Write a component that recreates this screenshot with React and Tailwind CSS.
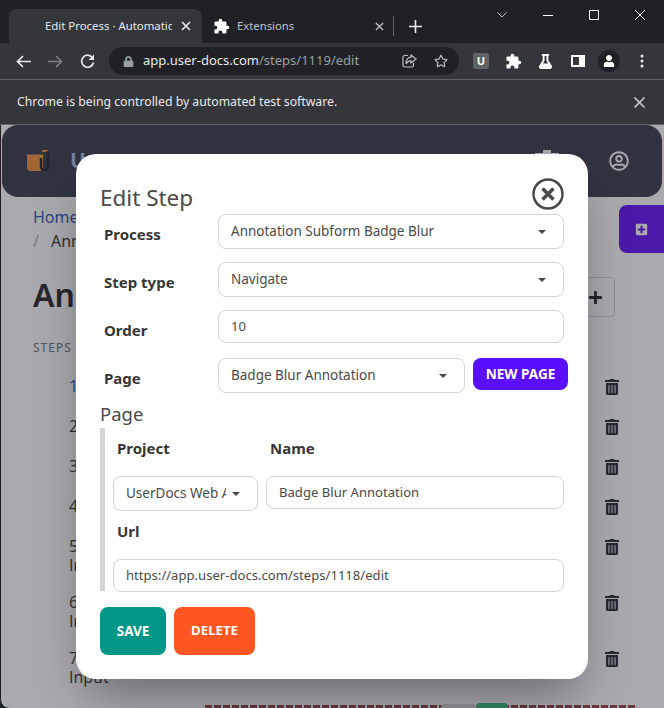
import React from "react";
import { FaTrashAlt, FaPlusSquare, FaRegUserCircle, FaFlask, FaPlus, FaLock, FaRegStar, FaUser } from "react-icons/fa";
import { MdExtension } from "react-icons/md";

const font = { fontFamily: '"Noto Sans", sans-serif' };

function Caret({ className = "" }) {
  return <span className={"ml-auto shrink-0 w-0 h-0 border-x-[4px] border-x-transparent border-t-[4px] border-t-[#4a4a4a] " + className} />;
}

function Select({ value, className = "" }) {
  return (
    <div className={"h-[35px] flex items-center pl-[12px] pr-[17px] border border-[#d4d4d8] rounded-[8px] text-[13.5px] text-[#4a4a4a] bg-white overflow-hidden " + className}>
      <span className="whitespace-nowrap overflow-hidden">{value}</span>
      <Caret />
    </div>
  );
}

function Input({ value, className = "" }) {
  return (
    <div className={"h-[33px] flex items-center pl-[12px] border border-[#d4d4d8] rounded-[8px] text-[13.1px] text-[#4a4a4a] bg-white whitespace-nowrap " + className}>
      {value}
    </div>
  );
}

function Row({ label, children, className = "" }) {
  return (
    <div className={"flex items-start " + className}>
      <label className="w-[118px] shrink-0 pl-[4px] pt-[8px] text-[15px] font-bold text-[#363636] leading-[24px]">{label}</label>
      {children}
    </div>
  );
}

const steps = [
  { n: "1", h: 40 },
  { n: "2", h: 40 },
  { n: "3", h: 40 },
  { n: "4", h: 40 },
  { n: "5", sub: "In", h: 56 },
  { n: "6", sub: "In", h: 56 },
  { n: "7", sub: "Input", h: 56 },
];

function Background() {
  return (
    <div className="h-[583px] bg-white text-[#4a4a4a] overflow-hidden rounded-bl-[8px]">
      <header className="h-[72px] ml-[1px] mr-[2px] rounded-2xl bg-[#484b58] flex items-center pl-[25px] pr-[33px]">
        <svg width="24" height="22" viewBox="0 0 24 22">
          <path d="M0 4.500h16v12.500a4 4 0 0 1-4 4H4a4 4 0 0 1-4-4z" fill="#f59a45" />
          <path d="M15 1h6" stroke="#f59a45" strokeWidth="2" />
          <path d="M14 8v8.500a3.500 3.500 0 0 0 7 0V1" fill="none" stroke="#2e3442" strokeWidth="2.600" />
        </svg>
        <span className="ml-[19px] text-[21px] font-bold text-[#a8c4e0]">U</span>
        <svg className="ml-auto mr-[50px]" width="24" height="22" viewBox="0 0 24 22" fill="#fff"><path d="M0 3h8V0h8v3h8v19H0z" /></svg>
        <FaRegUserCircle className="text-white" size={20} />
      </header>
      <div className="relative pl-[32px] pr-[49px] pt-[8px]">
        <div className="text-[16px] leading-[24px] text-[#485fc7]">Home</div>
        <div className="text-[16px] leading-[24px]"><span className="text-[#b5b5b5] mr-[12px]">/</span>Annotation</div>
        <div className="flex items-center mt-[24px] h-[40px]">
          <h1 className="-mt-[4px] text-[32px] font-semibold text-[#363636]">Annotation</h1>
          <div className="ml-auto w-[40px] h-[40px] border border-[#dbdbdb] rounded-[4px] flex items-center justify-center"><FaPlus size={15} className="text-[#363636]" /></div>
        </div>
        <div className="mt-[22px] h-[18px] text-[12px] leading-[18px] tracking-[1px] text-[#7a7a7a]">STEPS</div>
        <div className="mt-[20px]">
          {steps.map((s) => (
            <div key={s.n} className="flex pl-[36px] text-[16px] leading-[19px] text-[#4a4540]" style={{ height: s.h, fontFamily: '"Open Sans", sans-serif' }}>
              <div>
                <div className={s.n === "1" ? "text-[#485fc7]" : ""}>{s.n}</div>
                {s.sub && <div>{s.sub}</div>}
              </div>
              <FaTrashAlt className="ml-auto mt-[2px] mr-[-5px] text-[#3a3a42]" size={16} />
            </div>
          ))}
        </div>
        <div className="h-[3px] ml-[172px] mr-[-20px] bg-[repeating-linear-gradient(90deg,#9a5050_0_7px,transparent_7px_9px)]" />
        <div className="absolute right-0 top-[8px] w-[45px] h-[48px] rounded-l-[8px] bg-[#6d23f6] flex items-center justify-center">
          <FaPlusSquare size={13} className="text-white" />
        </div>
        <div className="absolute left-[440px] top-[507px] w-[36px] h-[10px] rounded-t-[4px] bg-[#dbdbdb]" />
        <div className="absolute left-[475px] top-[506px] w-[32px] h-[10px] rounded-t-[4px] bg-[#48c78e]" />
      </div>
    </div>
  );
}

function Modal() {
  return (
    <div className="absolute left-[76px] top-[154px] w-[512px] h-[525px] bg-white rounded-[20px] shadow-[0_25px_50px_-12px_rgba(0,0,0,0.4)] px-[24px]" style={font}>
      <div className="flex items-start h-[60px] pt-[28px]">
        <h2 className="text-[22.500px] leading-[32px] text-[#4a4a4a]">Edit Step</h2>
        <svg className="ml-auto mt-[-4px]" width="32" height="32" viewBox="0 0 32 32" fill="none" stroke="#4a4a4a">
          <circle cx="16" cy="16" r="14.500" strokeWidth="2.500" />
          <path d="M10.500 10.500l11 11M21.500 10.500l-11 11" strokeWidth="3.600" />
        </svg>
      </div>
      <div className="w-[468px]">
        <Row label="Process" className="h-[48px]"><Select value="Annotation Subform Badge Blur" className="w-[346px]" /></Row>
        <Row label="Step type" className="h-[48px]"><Select value="Navigate" className="w-[346px]" /></Row>
        <Row label="Order" className="h-[48px]"><Input value="10" className="w-[346px]" /></Row>
        <Row label="Page" className="h-[44px]">
          <Select value="Badge Blur Annotation" className="w-[247px]" />
          <button className="ml-[8px] shrink-0 w-[95px] h-[32px] rounded-[8px] bg-[#5a0fff] text-white text-[13.600px] font-bold">NEW PAGE</button>
        </Row>
      </div>
      <h3 className="text-[18.500px] leading-[24px] text-[#4a4a4a] h-[26px]">Page</h3>
      <div className="border-l-[5px] border-[#d4d4d4] pl-[8px] h-[163px]">
        <div className="flex h-[48px] pt-[8px] text-[15px] font-bold text-[#363636] leading-[24px]">
          <span className="w-[157px] pl-[4px]">Project</span>
          <span>Name</span>
        </div>
        <div className="flex gap-[8px]">
          <div className="w-[145px] h-[35px] flex items-center pl-[12px] pr-[17px] border border-[#d4d4d8] rounded-[8px] text-[13.500px] text-[#4a4a4a] overflow-hidden">
            <span className="whitespace-nowrap overflow-hidden w-[100px]">UserDocs Web Application</span>
            <Caret />
          </div>
          <Input value="Badge Blur Annotation" className="w-[298px]" />
        </div>
        <div className="h-[48px] pt-[8px] pl-[4px] text-[15px] font-bold text-[#363636] leading-[24px]">Url</div>
        <Input value="https://app.user-docs.com/steps/1118/edit" className="w-[451px]" />
      </div>
      <div className="flex gap-[8px] mt-[16px]">
        <button className="w-[66px] h-[48px] rounded-[8px] bg-[#009688] text-white text-[13.500px] font-bold">SAVE</button>
        <button className="w-[81px] h-[48px] rounded-[8px] bg-[#ff5722] text-white text-[13.200px] font-bold">DELETE</button>
      </div>
    </div>
  );
}

function ChromeBar() {
  return (
    <div className="bg-[#202124] text-white" style={font}>
      <div className="h-[43px] flex items-end pl-[9px] relative">
        <div className="w-[193px] h-[34px] bg-[#35363a] rounded-t-[8px] flex items-center pl-[36px] pr-[11px]">
          <span className="text-[11.400px] text-[#e8eaed] whitespace-nowrap overflow-hidden w-[127px]">Edit Process · Automation</span>
          <svg className="ml-auto" width="10" height="10" viewBox="0 0 10 10" stroke="#e8eaed" strokeWidth="1.600"><path d="M1 1l8 8M9 1l-8 8" /></svg>
        </div>
        <div className="w-[191px] h-[34px] flex items-center pl-[11px] pr-[9px]">
          <MdExtension size={17} className="text-white" />
          <span className="ml-[7px] text-[11.300px] text-[#bdc1c6]">Extensions</span>
          <svg className="ml-auto" width="9" height="9" viewBox="0 0 10 10" stroke="#bdc1c6" strokeWidth="1.500"><path d="M1 1l8 8M9 1l-8 8" /></svg>
        </div>
        <span className="w-px h-[20px] mb-[7px] bg-[#5f6368]" />
        <svg className="ml-[15px] mb-[10px]" width="13" height="13" viewBox="0 0 13 13" stroke="#e8eaed" strokeWidth="1.600"><path d="M6.500 0v13M0 6.500h13" /></svg>
        <div className="ml-auto self-start flex items-center h-[30px]">
          <svg width="10" height="6" viewBox="0 0 10 6" fill="none" stroke="#bdc1c6"><path d="M.5.500l4.500 4.500 4.500-4.500" /></svg>
          <svg className="ml-[36px]" width="10" height="1" viewBox="0 0 10 1" stroke="#fff"><path d="M0 .5h10" /></svg>
          <svg className="ml-[36px]" width="10" height="10" viewBox="0 0 10 10" fill="none" stroke="#fff"><path d="M.5.5h9v9h-9z" /></svg>
          <svg className="ml-[36px] mr-[19px]" width="10" height="10" viewBox="0 0 10 10" stroke="#fff"><path d="M0 0l10 10M10 0L0 10" /></svg>
        </div>
      </div>
      <div className="h-[37px] bg-[#35363a] border-b border-[#5f6368] flex items-center pl-[16px] pr-[16px]">
        <svg width="15" height="13" viewBox="0 0 15 13" fill="none" stroke="#e8eaed" strokeWidth="1.700"><path d="M15 6.500H2M7 1L1.500 6.500 7 12" /></svg>
        <svg className="ml-[17px]" width="15" height="13" viewBox="0 0 15 13" fill="none" stroke="#7c7f84" strokeWidth="1.700"><path d="M0 6.500h13M8 1l5.500 5.500L8 12" /></svg>
        <svg className="ml-[17px]" width="15" height="15" viewBox="0 0 15 15" fill="none" stroke="#e8eaed" strokeWidth="1.700"><path d="M13 4.500A6 6 0 1 0 13.500 8.500" /><path d="M14 .5v5.500H8.500z" fill="#e8eaed" stroke="none" /></svg>
        <div className="ml-[14px] w-[350px] h-[28px] rounded-[14px] bg-[#202124] flex items-center pl-[14px] pr-[11px]">
          <FaLock size={11} className="text-[#9aa0a6]" />
          <span className="ml-[9px] text-[13px] text-[#e8eaed]">app.user-docs.com<span className="text-[#9aa0a6]">/steps/1119/edit</span></span>
          <svg className="ml-auto" width="15" height="14" viewBox="0 0 15 14" fill="none" stroke="#bdc1c6" strokeWidth="1.200"><path d="M6 1.500H2.500A1.500 1.500 0 0 0 1 3v8.500A1.500 1.500 0 0 0 2.500 13h7.500a1.500 1.500 0 0 0 1.500-1.500V9" /><path d="M9 1l5 4-5 4V6.800C6.500 6.800 5 8 4 10c0-4 2-6.500 5-6.800z" /></svg>
          <FaRegStar className="ml-[17px] text-[#bdc1c6]" size={14} />
        </div>
        <div className="ml-[14px] w-[16px] h-[16px] rounded-[2px] bg-[#5f6368] text-[11px] leading-[16px] text-center font-bold text-white">U</div>
        <MdExtension size={17} className="ml-[16px] text-white" />
        <FaFlask size={15} className="ml-[16px] text-white" />
        <svg className="ml-[18px]" width="14" height="12" viewBox="0 0 14 12"><path d="M0 0h14v12H0z" fill="#fff" /><path d="M2 2h6v8H2z" fill="#35363a" /></svg>
        <div className="ml-[13px] w-[22px] h-[22px] rounded-full bg-[#202124] flex items-center justify-center"><FaUser size={12} className="text-white" /></div>
        <svg className="ml-auto mr-[4px]" width="4" height="14" viewBox="0 0 4 14" fill="#e8eaed"><circle cx="2" cy="2" r="1.500" /><circle cx="2" cy="7" r="1.500" /><circle cx="2" cy="12" r="1.500" /></svg>
      </div>
      <div className="h-[45px] bg-[#35363a] border-b border-[#5f6368] flex items-center pl-[17px] pr-[19px]">
        <span className="text-[12.250px] text-[#e8eaed]">Chrome is being controlled by automated test software.</span>
        <svg className="ml-auto" width="11" height="11" viewBox="0 0 11 11" stroke="#bdc1c6" strokeWidth="1.700"><path d="M.5.5l10 10M10.500.5l-10 10" /></svg>
      </div>
    </div>
  );
}

export default function App() {
  return (
    <div className="relative w-[664px] h-[708px] overflow-hidden bg-[#202124]" style={font}>
      <ChromeBar />
      <div className="relative ml-[1px] rounded-bl-[8px] overflow-hidden">
        <Background />
        <div className="absolute inset-0 bg-[rgba(8,10,24,0.35)]" />
      </div>
      <Modal />
    </div>
  );
}
